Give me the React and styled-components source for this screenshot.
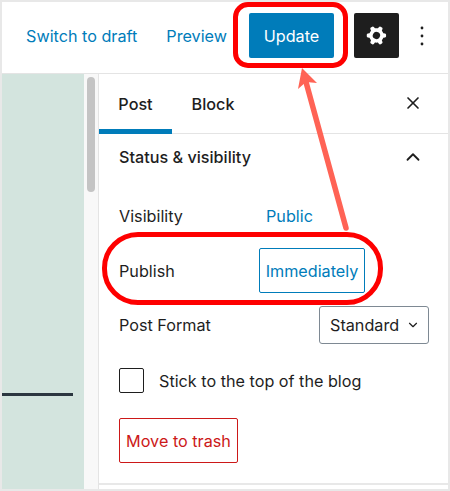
import React from 'react'
import styled, { createGlobalStyle } from 'styled-components'
import { X, ChevronUp, ChevronDown } from 'lucide-react'

const GlobalStyle = createGlobalStyle`
  html, body { margin: 0; padding: 0; background: #fff; }
  body { font-family: Inter, "Liberation Sans", sans-serif; color: #1e1e1e; }
`

const Frame = styled.div`
  position: relative;
  width: 450px;
  height: 491px;
  box-sizing: border-box;
  border: 2px solid #e8e8e8;
  display: flex;
  flex-direction: column;
  overflow: hidden;
  font-size: 16.2px;
`

const Header = styled.header`
  flex: none;
  display: flex;
  align-items: center;
  padding: 0 0 4px 24px;
  box-sizing: content-box;
  border-bottom: 1px solid #e4e4e4;
  height: 67px;
`

const LinkText = styled.span`
  color: #007cba;
  margin-right: ${p => p.$gap || 0}px;
`

const UpdateButton = styled.button`
  width: 85px;
  height: 45px;
  border: 0;
  border-radius: 2px;
  background: #007cba;
  color: #fff;
  font: inherit;
  margin-right: 20px;
  padding: 0;
`

const SettingsButton = styled.button`
  width: 45px;
  height: 45px;
  border: 0;
  border-radius: 2px;
  background: #1e1e1e;
  color: #fff;
  display: flex;
  align-items: center;
  justify-content: center;
  padding: 0;
  margin-right: 11px;
`

const Body = styled.div`
  flex: 1;
  display: flex;
  min-height: 0;
`

const Canvas = styled.div`
  width: 82px;
  flex: none;
  background: #d3e4de;
  padding-top: 319px;
  box-sizing: border-box;
`

const Rule = styled.div`
  width: 71px;
  height: 3px;
  background: #2b3640;
`

const Gutter = styled.div`
  width: 14px;
  flex: none;
  background: #f8f8f8;
  padding: 3px 3px 0;
  box-sizing: border-box;
`

const Thumb = styled.div`
  height: 115px;
  border-radius: 4px;
  background: #c4c4c4;
`

const Sidebar = styled.aside`
  flex: 1;
  border-left: 1px solid #e4e4e4;
  display: flex;
  flex-direction: column;
`

const Tabs = styled.div`
  height: 59px;
  flex: none;
  display: flex;
  align-items: stretch;
  border-bottom: 1px solid #e4e4e4;
  padding-right: 25px;
`

const Tab = styled.div`
  width: ${p => p.$w}px;
  box-sizing: border-box;
  display: flex;
  align-items: center;
  justify-content: center;
  font-weight: 500;
  padding-top: 4px;
  margin-bottom: -1px;
  border-bottom: 5px solid ${p => (p.$active ? '#007cba' : 'transparent')};
`

const TabClose = styled.div`
  margin-left: auto;
  display: flex;
  align-items: center;
  padding-bottom: 2px;
`

const Panel = styled.section`
  padding: 0 19px 20px 20px;
  border-bottom: 2px solid #e8e8e8;
`

const PanelTitle = styled.div`
  height: 46px;
  display: flex;
  align-items: center;
  justify-content: space-between;
  font-weight: 500;
  margin-bottom: 21px;
  padding-right: 5px;
`

const Row = styled.div`
  display: flex;
  align-items: center;
  height: ${p => p.$h}px;
  margin-bottom: ${p => p.$mb || 0}px;
`

const Label = styled.div`
  width: 140px;
`

const PublicLink = styled.span`
  color: #007cba;
  margin-left: 7px;
`

const DateButton = styled.div`
  width: 106px;
  height: 45px;
  box-sizing: border-box;
  border: 1px solid #007cba;
  border-radius: 2px;
  color: #007cba;
  display: flex;
  align-items: center;
  justify-content: center;
`

const FormatSelect = styled.div`
  margin-left: auto;
  width: 110px;
  height: 38px;
  box-sizing: border-box;
  border: 1px solid #7e8993;
  border-radius: 3px;
  display: flex;
  align-items: center;
  justify-content: space-between;
  padding: 0 8px 0 10px;
`

const Checkbox = styled.div`
  width: 25px;
  height: 25px;
  box-sizing: border-box;
  border: 1px solid #1e1e1e;
  border-radius: 2px;
  margin-right: 15px;
`

const TrashButton = styled.div`
  width: 119px;
  height: 45px;
  box-sizing: border-box;
  border: 1px solid #cc1818;
  border-radius: 2px;
  color: #cc1818;
  display: flex;
  align-items: center;
  justify-content: center;
`

// red callouts drawn over the screenshot
const Callout = styled.div`
  position: absolute;
  left: ${p => p.$x}px;
  top: ${p => p.$y}px;
  width: ${p => p.$w}px;
  height: ${p => p.$h}px;
  box-sizing: border-box;
  border: 5px solid #fe0000;
  border-radius: ${p => p.$r}px;
`

const ArrowLayer = styled.svg`
  position: absolute;
  left: -2px;
  top: -2px;
`

export default function App() {
  return (
    <Frame>
      <GlobalStyle />
      <Header>
        <LinkText $gap={29}>Switch to draft</LinkText>
        <LinkText $gap={22}>Preview</LinkText>
        <UpdateButton>Update</UpdateButton>
        <SettingsButton>
          <svg width="29" height="29" viewBox="0 0 24 24" fill="currentColor">
            <path
              fillRule="evenodd"
              transform="rotate(30 12 12)"
              d="M10.289 4.836A1 1 0 0111.275 4h1.306a1 1 0 01.987.836l.244 1.466c.787.26 1.503.679 2.108 1.218l1.393-.522a1 1 0 011.216.437l.653 1.13a1 1 0 01-.23 1.273l-1.148.944a6.025 6.025 0 010 2.435l1.149.946a1 1 0 01.23 1.272l-.653 1.13a1 1 0 01-1.216.437l-1.394-.522c-.605.54-1.32.958-2.108 1.218l-.244 1.466a1 1 0 01-.987.836h-1.306a1 1 0 01-.986-.836l-.244-1.466a5.995 5.995 0 01-2.108-1.218l-1.394.522a1 1 0 01-1.217-.436l-.653-1.131a1 1 0 01.23-1.272l1.149-.946a6.026 6.026 0 010-2.435l-1.148-.944a1 1 0 01-.23-1.272l.653-1.131a1 1 0 011.217-.437l1.393.522a5.994 5.994 0 012.108-1.218l.244-1.466zM14.929 12a3 3 0 11-6 0 3 3 0 016 0z"
            />
          </svg>
        </SettingsButton>
        <svg width="24" height="24" viewBox="0 0 24 24" fill="#1e1e1e">
          <circle cx="12" cy="4" r="1.4" />
          <circle cx="12" cy="12" r="1.4" />
          <circle cx="12" cy="20" r="1.4" />
        </svg>
      </Header>
      <Body>
        <Canvas><Rule /></Canvas>
        <Gutter><Thumb /></Gutter>
        <Sidebar>
          <Tabs>
            <Tab $w={73} $active>Post</Tab>
            <Tab $w={82}>Block</Tab>
            <TabClose><X size={20} strokeWidth={2} /></TabClose>
          </Tabs>
          <Panel>
            <PanelTitle>
              Status &amp; visibility
              <ChevronUp size={22} strokeWidth={2} />
            </PanelTitle>
            <Row $h={30} $mb={17}>
              <Label>Visibility</Label>
              <PublicLink>Public</PublicLink>
            </Row>
            <Row $h={45} $mb={13}>
              <Label>Publish</Label>
              <DateButton>Immediately</DateButton>
            </Row>
            <Row $h={38} $mb={24}>
              <Label>Post Format</Label>
              <FormatSelect>
                Standard
                <ChevronDown size={14} strokeWidth={2} />
              </FormatSelect>
            </Row>
            <Row $h={25} $mb={25}>
              <Checkbox />
              <span>Stick to the top of the blog</span>
            </Row>
            <TrashButton>Move to trash</TrashButton>
          </Panel>
        </Sidebar>
      </Body>
      <Callout $x={231} $y={0} $w={115} $h={66} $r={15} />
      <Callout $x={100} $y={230} $w={281} $h={73} $r={36} />
      <ArrowLayer width="450" height="491" viewBox="0 0 450 491">
        <path d="M346 228 L306 82" stroke="#ff6355" strokeWidth="5.5" strokeLinecap="round" fill="none" />
        <path d="M302 68 L317 83 L306 82 L298 89 Z" fill="#ff6355" />
      </ArrowLayer>
    </Frame>
  )
}
